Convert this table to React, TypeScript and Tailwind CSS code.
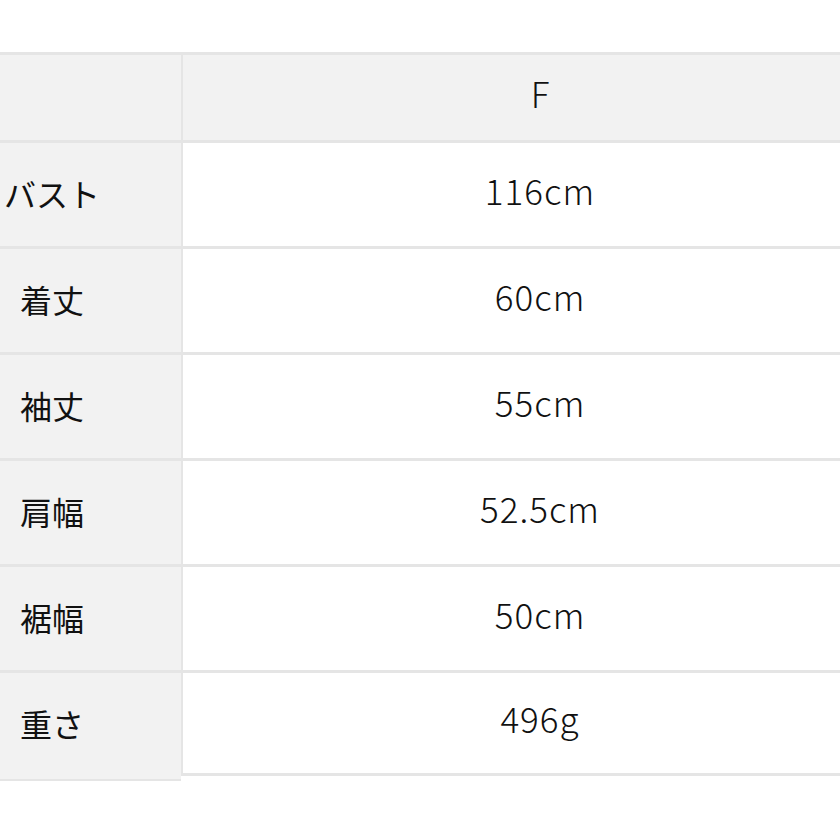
import React from 'react';

const rows: { label: string; value: string }[] = [
  { label: 'バスト', value: '116cm' },
  { label: '着丈', value: '60cm' },
  { label: '袖丈', value: '55cm' },
  { label: '肩幅', value: '52.5cm' },
  { label: '裾幅', value: '50cm' },
  { label: '重さ', value: '496g' },
];

export default function App() {
  return (
    <div
      className="w-[840px] h-[840px] bg-white pt-[52px] text-[#111] overflow-hidden"
      style={{ fontFamily: '"Noto Sans CJK JP", "Noto Sans", sans-serif' }}
    >
      {/* header */}
      <div className="flex h-[88px]">
        <div className="w-[181px] bg-[#f2f2f2] border-t-[3px] border-[#e5e5e5]" />
        <div className="flex-1 flex items-center justify-center pl-[57px] pb-[8px] bg-[#f2f2f2] border-t-[3px] border-l-[2px] border-[#e5e5e5] text-[35px] font-light">
          F
        </div>
      </div>

      {/* body */}
      {rows.map((r, i) => (
        <div key={r.label} className="flex h-[106px]">
          <div className="w-[181px] bg-[#f2f2f2] border-t-[3px] border-[#e5e5e5] flex items-center pb-[3px]">
            <span className="w-[104px] text-center text-[32px] whitespace-nowrap">{r.label}</span>
          </div>
          <div
            className={`flex-1 flex items-center justify-center pl-[57px] pb-[9px] bg-white border-t-[3px] border-l-[2px] border-[#e5e5e5] text-[35px] font-light tracking-[1px] ${
              i === rows.length - 1 ? 'border-b-[3px]' : ''
            }`}
          >
            {r.value}
          </div>
        </div>
      ))}
      <div className="flex">
        <div className="w-[181px] h-[5px] bg-[#f2f2f2] border-b-[2px] border-[#e5e5e5]" />
      </div>
    </div>
  );
}
